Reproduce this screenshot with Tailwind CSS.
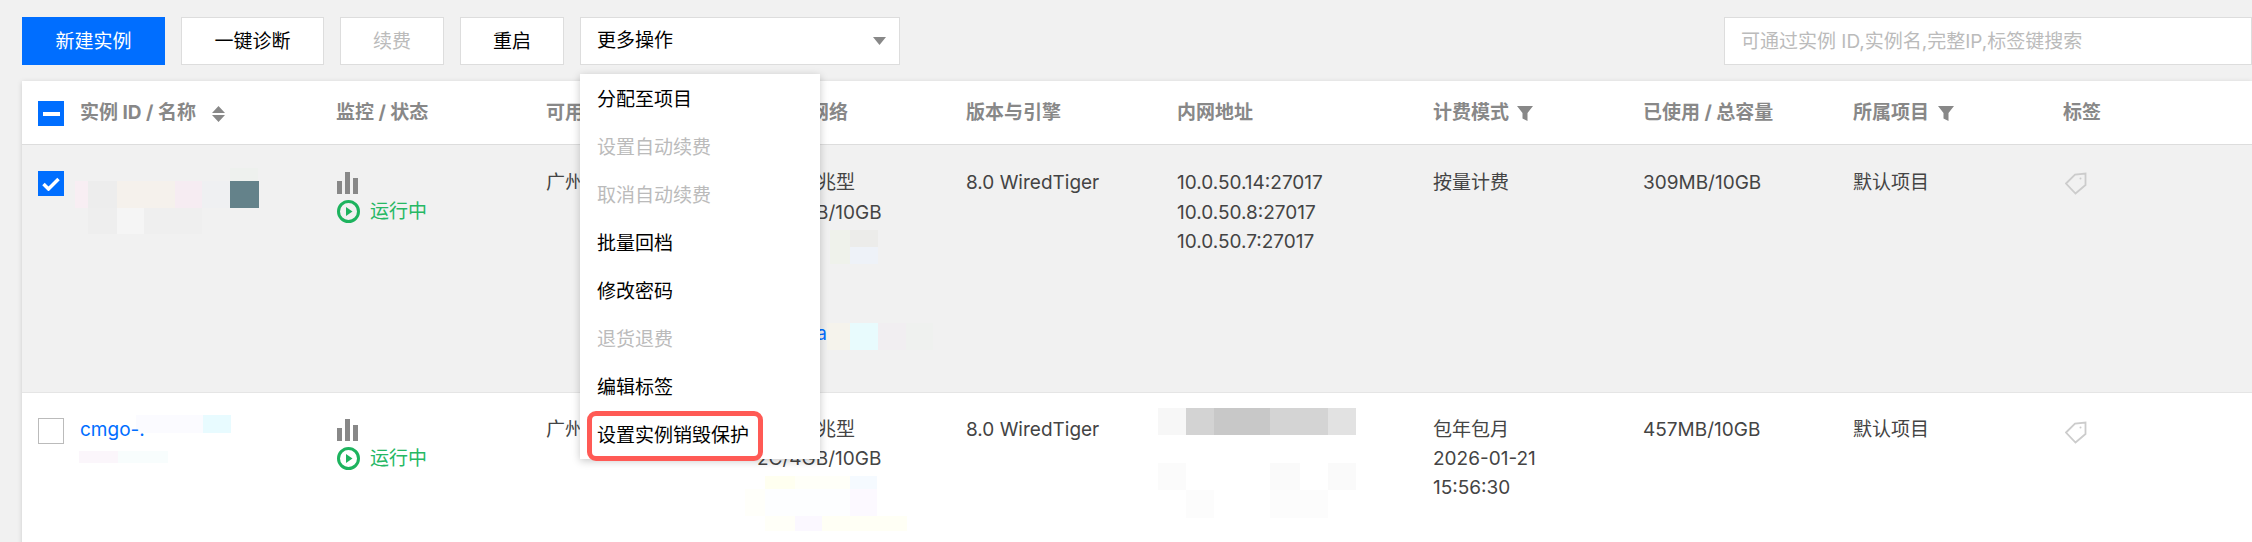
<!DOCTYPE html>
<html lang="zh-CN">
<head>
    <meta charset="UTF-8">
    <title>实例列表</title>
    <script src="https://cdn.jsdelivr.net/npm/@tailwindcss/browser@4"></script>
</head>
<body class="h-[542px] overflow-hidden bg-[#f1f1f1] text-[19px] text-[#444] [font-family:'Inter','Noto_Sans_CJK_SC',sans-serif]">

    <!-- toolbar -->
    <div class="flex items-start pt-[17px] pl-[22px]">
        <button class="h-[48px] w-[143px] bg-[#006eff] pt-[2px] text-white">新建实例</button>
        <button class="ml-[16px] h-[48px] w-[143px] border border-[#ddd] bg-white pt-[2px] text-black">一键诊断</button>
        <button class="ml-[16px] h-[48px] w-[104px] border border-[#ddd] bg-white pt-[2px] text-[#bbb]">续费</button>
        <button class="ml-[16px] h-[48px] w-[104px] border border-[#ddd] bg-white pt-[2px] text-black">重启</button>

        <div class="relative z-10 ml-[16px] w-[320px]">
            <div class="flex h-[48px] items-center justify-between border border-[#ddd] bg-white pl-[16px] pr-[13px] text-black">
                <span>更多操作</span>
                <svg width="13" height="8" viewBox="0 0 13 8" class="fill-[#888]"><path d="M0 0h13L6.500 8z"/></svg>
            </div>
            <ul class="absolute left-0 top-[57px] h-[385px] w-[240px] bg-white pt-[2px] shadow-[0_2px_8px_rgba(0,0,0,0.22)]">
                <li class="flex h-[48px] items-center pl-[17px] text-black">分配至项目</li>
                <li class="flex h-[48px] items-center pl-[17px] text-[#bbb]">设置自动续费</li>
                <li class="flex h-[48px] items-center pl-[17px] text-[#bbb]">取消自动续费</li>
                <li class="flex h-[48px] items-center pl-[17px] text-black">批量回档</li>
                <li class="flex h-[48px] items-center pl-[17px] text-black">修改密码</li>
                <li class="flex h-[48px] items-center pl-[17px] text-[#bbb]">退货退费</li>
                <li class="flex h-[48px] items-center pl-[17px] text-black">编辑标签</li>
                <li class="relative flex h-[48px] items-center pl-[17px] text-black">
                    设置实例销毁保护
                    <div class="absolute left-[7px] -top-[1px] h-[50px] w-[176px] rounded-[9px] border-[5px] border-[#ff5a55]"></div>
                </li>
            </ul>
        </div>

        <div class="ml-auto flex h-[48px] w-[528px] items-center border border-[#ddd] bg-white pl-[16px] pt-[2px] text-[#bbb]">可通过实例 ID,实例名,完整IP,标签键搜索</div>
    </div>

    <!-- table -->
    <div class="ml-[22px] mt-[16px] bg-white shadow-[0_1px_5px_rgba(0,0,0,0.15)]">

        <!-- head -->
        <div class="grid h-[64px] grid-cols-[314px_210px_211px_209px_211px_256px_210px_210px_210px_189px] items-center border-b border-[#ddd] pt-[2px] font-bold text-[#888]">
            <div class="flex items-center pl-[16px]">
                <span class="flex h-[25px] w-[26px] items-center justify-center bg-[#006eff]"><span class="h-[4px] w-[17px] bg-white"></span></span>
                <span class="ml-[16px]">实例 ID / 名称</span>
                <svg width="13" height="16" viewBox="0 0 13 16" class="ml-[16px] fill-[#888]"><path d="M6.500 0L13 7H0zM0 9h13l-6.500 7z"/></svg>
            </div>
            <div>监控 / 状态</div>
            <div class="w-[34px] overflow-hidden whitespace-nowrap">可用</div>
            <div class="pl-[53px]">网络</div>
            <div>版本与引擎</div>
            <div>内网地址</div>
            <div class="flex items-center">计费模式
                <svg width="16" height="15" viewBox="0 0 16 15" class="ml-[8px] fill-[#888]"><path d="M0 0h16l-5.500 7v8l-5-2.500V7z"/></svg>
            </div>
            <div>已使用 / 总容量</div>
            <div class="flex items-center">所属项目
                <svg width="16" height="15" viewBox="0 0 16 15" class="ml-[9px] fill-[#888]"><path d="M0 0h16l-5.500 7v8l-5-2.500V7z"/></svg>
            </div>
            <div>标签</div>
        </div>

        <!-- row 1, selected -->
        <div class="grid h-[248px] grid-cols-[314px_210px_211px_209px_211px_256px_210px_210px_210px_189px] border-b border-[#e5e5e5] bg-[#f1f1f1] leading-[29.5px]">
            <div class="flex pl-[16px] pt-[26px]">
                <span class="flex h-[25px] w-[26px] items-center justify-center bg-[#006eff]">
                    <svg width="18" height="14" viewBox="0 0 18 14" fill="none" stroke="white" stroke-width="3.500"><path d="M1.500 7l5 5 10-10"/></svg>
                </span>
                <div class="ml-[11px] -mt-[3px]">
                    <div class="ml-[155px] h-[13px] w-[28px] bg-[#eef1ee]"></div>
                    <div class="flex h-[27px]">
                        <div class="w-[13px] bg-[#f8eef3]"></div>
                        <div class="w-[29px] bg-[#ededed]"></div>
                        <div class="w-[58px] bg-[#f5f1ec]"></div>
                        <div class="w-[27px] bg-[#f6ecf2]"></div>
                        <div class="w-[28px] bg-[#eff0f2]"></div>
                        <div class="w-[29px] bg-[#64828a]"></div>
                    </div>
                    <div class="ml-[13px] flex h-[26px]">
                        <div class="w-[29px] bg-[#eeeeee]"></div>
                        <div class="w-[27px] bg-[#f5f5f5]"></div>
                        <div class="w-[58px] bg-[#efefef]"></div>
                    </div>
                </div>
            </div>
            <div class="pt-[27px]">
                <svg width="21" height="22" viewBox="0 0 21 22" class="ml-[1px] block fill-[#888]"><path d="M0 9h5v13H0zM8 0h5v22H8zM16 6h5v16h-5z"/></svg>
                <div class="mt-[6px] flex h-[23px] items-center text-[#26b864]">
                    <svg width="23" height="23" viewBox="0 0 23 23" class="ml-[1px]"><circle cx="11.500" cy="11.500" r="10" fill="none" stroke="#1db35e" stroke-width="3"/><path d="M9 7l6.500 4.500L9 16z" fill="#1db35e"/></svg>
                    <span class="ml-[10px]">运行中</span>
                </div>
            </div>
            <div class="pt-[23px]"><div class="w-[34px] overflow-hidden whitespace-nowrap">广州</div></div>
            <div class="pt-[23px]">
                <div class="pl-[60px]">兆型</div>
                <div class="pl-[59px]">B/10GB</div>
                <div class="ml-[73px] mt-[3px] flex h-[34px]">
                    <div class="w-[20px] bg-[#eff2eb]"></div>
                    <div class="w-[28px]">
                        <div class="h-[17px] bg-[#ececea]"></div>
                        <div class="h-[17px] bg-[#eef2f8]"></div>
                    </div>
                </div>
                <div class="mt-[59px] flex h-[27px]">
                    <div class="w-[70px] text-right leading-[22px] text-[#006eff]">a</div>
                    <div class="w-[23px] bg-[#f5f3ec]"></div>
                    <div class="w-[28px] bg-[#e8fbfd]"></div>
                    <div class="w-[28px] bg-[#f1eef1]"></div>
                    <div class="w-[27px] bg-[#eff1ef]"></div>
                </div>
            </div>
            <div class="pt-[23px]">8.0 WiredTiger</div>
            <div class="pt-[23px]">
                <div>10.0.50.14:27017</div>
                <div>10.0.50.8:27017</div>
                <div>10.0.50.7:27017</div>
            </div>
            <div class="pt-[23px]">按量计费</div>
            <div class="pt-[23px]">309MB/10GB</div>
            <div class="pt-[23px]">默认项目</div>
            <div class="pt-[27px]">
                <svg width="22" height="23" viewBox="0 0 22 23" fill="none" stroke="#ccc" stroke-width="1.800" class="ml-[2px]"><path d="M1 11.500L10 2.500 20.500 1.500V13L10.500 21.500z"/><circle cx="15.500" cy="6.500" r="1" fill="#ccc" stroke="none"/></svg>
            </div>
        </div>

        <!-- row 2 -->
        <div class="grid h-[160px] grid-cols-[314px_210px_211px_209px_211px_256px_210px_210px_210px_189px] leading-[29px]">
            <div class="flex pl-[16px] pt-[25px]">
                <span class="h-[26px] w-[26px] border border-[#bbb] bg-white"></span>
                <div class="ml-[16px] -mt-[3px]">
                    <div class="flex h-[18px] items-center">
                        <span class="relative top-[5px] w-[56px] shrink-0 whitespace-nowrap text-[#006eff]">cmgo-.</span>
                        <div class="h-[18px] w-[67px] bg-[#fbfbff]"></div>
                        <div class="h-[18px] w-[28px] bg-[#e8fbff]"></div>
                    </div>
                    <div class="-ml-[1px] mt-[18px] flex h-[12px]">
                        <div class="w-[39px] bg-[#fbf6fb]"></div>
                        <div class="w-[50px] bg-[#f8fdfd]"></div>
                    </div>
                </div>
            </div>
            <div class="pt-[26px]">
                <svg width="21" height="22" viewBox="0 0 21 22" class="ml-[1px] block fill-[#888]"><path d="M0 9h5v13H0zM8 0h5v22H8zM16 6h5v16h-5z"/></svg>
                <div class="mt-[6px] flex h-[23px] items-center text-[#26b864]">
                    <svg width="23" height="23" viewBox="0 0 23 23" class="ml-[1px]"><circle cx="11.500" cy="11.500" r="10" fill="none" stroke="#1db35e" stroke-width="3"/><path d="M9 7l6.500 4.500L9 16z" fill="#1db35e"/></svg>
                    <span class="ml-[10px]">运行中</span>
                </div>
            </div>
            <div class="pt-[22px]"><div class="w-[34px] overflow-hidden whitespace-nowrap">广州</div></div>
            <div class="pt-[22px]">
                <div class="pl-[60px]">兆型</div>
                <div>2C/4GB/10GB</div>
                <div class="ml-[8px] mt-[3px] flex h-[13px]">
                    <div class="w-[30px] bg-[#fffff0]"></div>
                    <div class="w-[55px] bg-[#fffff8]"></div>
                    <div class="w-[27px] bg-[#f5faff]"></div>
                </div>
                <div class="-ml-[12px] flex h-[27px]">
                    <div class="w-[20px] bg-[#fffffa]"></div>
                    <div class="w-[85px] bg-[#fdfeff]"></div>
                    <div class="w-[27px] bg-[#fcf9ff]"></div>
                </div>
                <div class="ml-[8px] flex h-[15px]">
                    <div class="w-[30px] bg-[#fffff8]"></div>
                    <div class="w-[27px] bg-[#fbf8ff]"></div>
                    <div class="w-[85px] bg-[#fffff5]"></div>
                </div>
            </div>
            <div class="pt-[22px]">8.0 WiredTiger</div>
            <div class="-ml-[19px] pt-[15px]">
                <div class="flex h-[27px]">
                    <div class="w-[28px] bg-[#f7f7f7]"></div>
                    <div class="w-[28px] bg-[#d3d3d3]"></div>
                    <div class="w-[56px] bg-[#c8c8c8]"></div>
                    <div class="w-[58px] bg-[#d4d4d4]"></div>
                    <div class="w-[28px] bg-[#e2e2e2]"></div>
                </div>
                <div class="mt-[28px] flex h-[27px]">
                    <div class="w-[28px] bg-[#fbfbfb]"></div>
                    <div class="ml-[84px] w-[30px] bg-[#fafafa]"></div>
                    <div class="ml-[28px] w-[28px] bg-[#fafafa]"></div>
                </div>
                <div class="flex h-[28px]">
                    <div class="ml-[28px] w-[28px] bg-[#fcfcfc]"></div>
                    <div class="ml-[56px] w-[58px] bg-[#fcfcfc]"></div>
                </div>
            </div>
            <div class="pt-[22px]">
                <div>包年包月</div>
                <div>2026-01-21</div>
                <div>15:56:30</div>
            </div>
            <div class="pt-[22px]">457MB/10GB</div>
            <div class="pt-[22px]">默认项目</div>
            <div class="pt-[28px]">
                <svg width="22" height="23" viewBox="0 0 22 23" fill="none" stroke="#ccc" stroke-width="1.800" class="ml-[2px]"><path d="M1 11.500L10 2.500 20.500 1.500V13L10.500 21.500z"/><circle cx="15.500" cy="6.500" r="1" fill="#ccc" stroke="none"/></svg>
            </div>
        </div>
    </div>
</body>
</html>
